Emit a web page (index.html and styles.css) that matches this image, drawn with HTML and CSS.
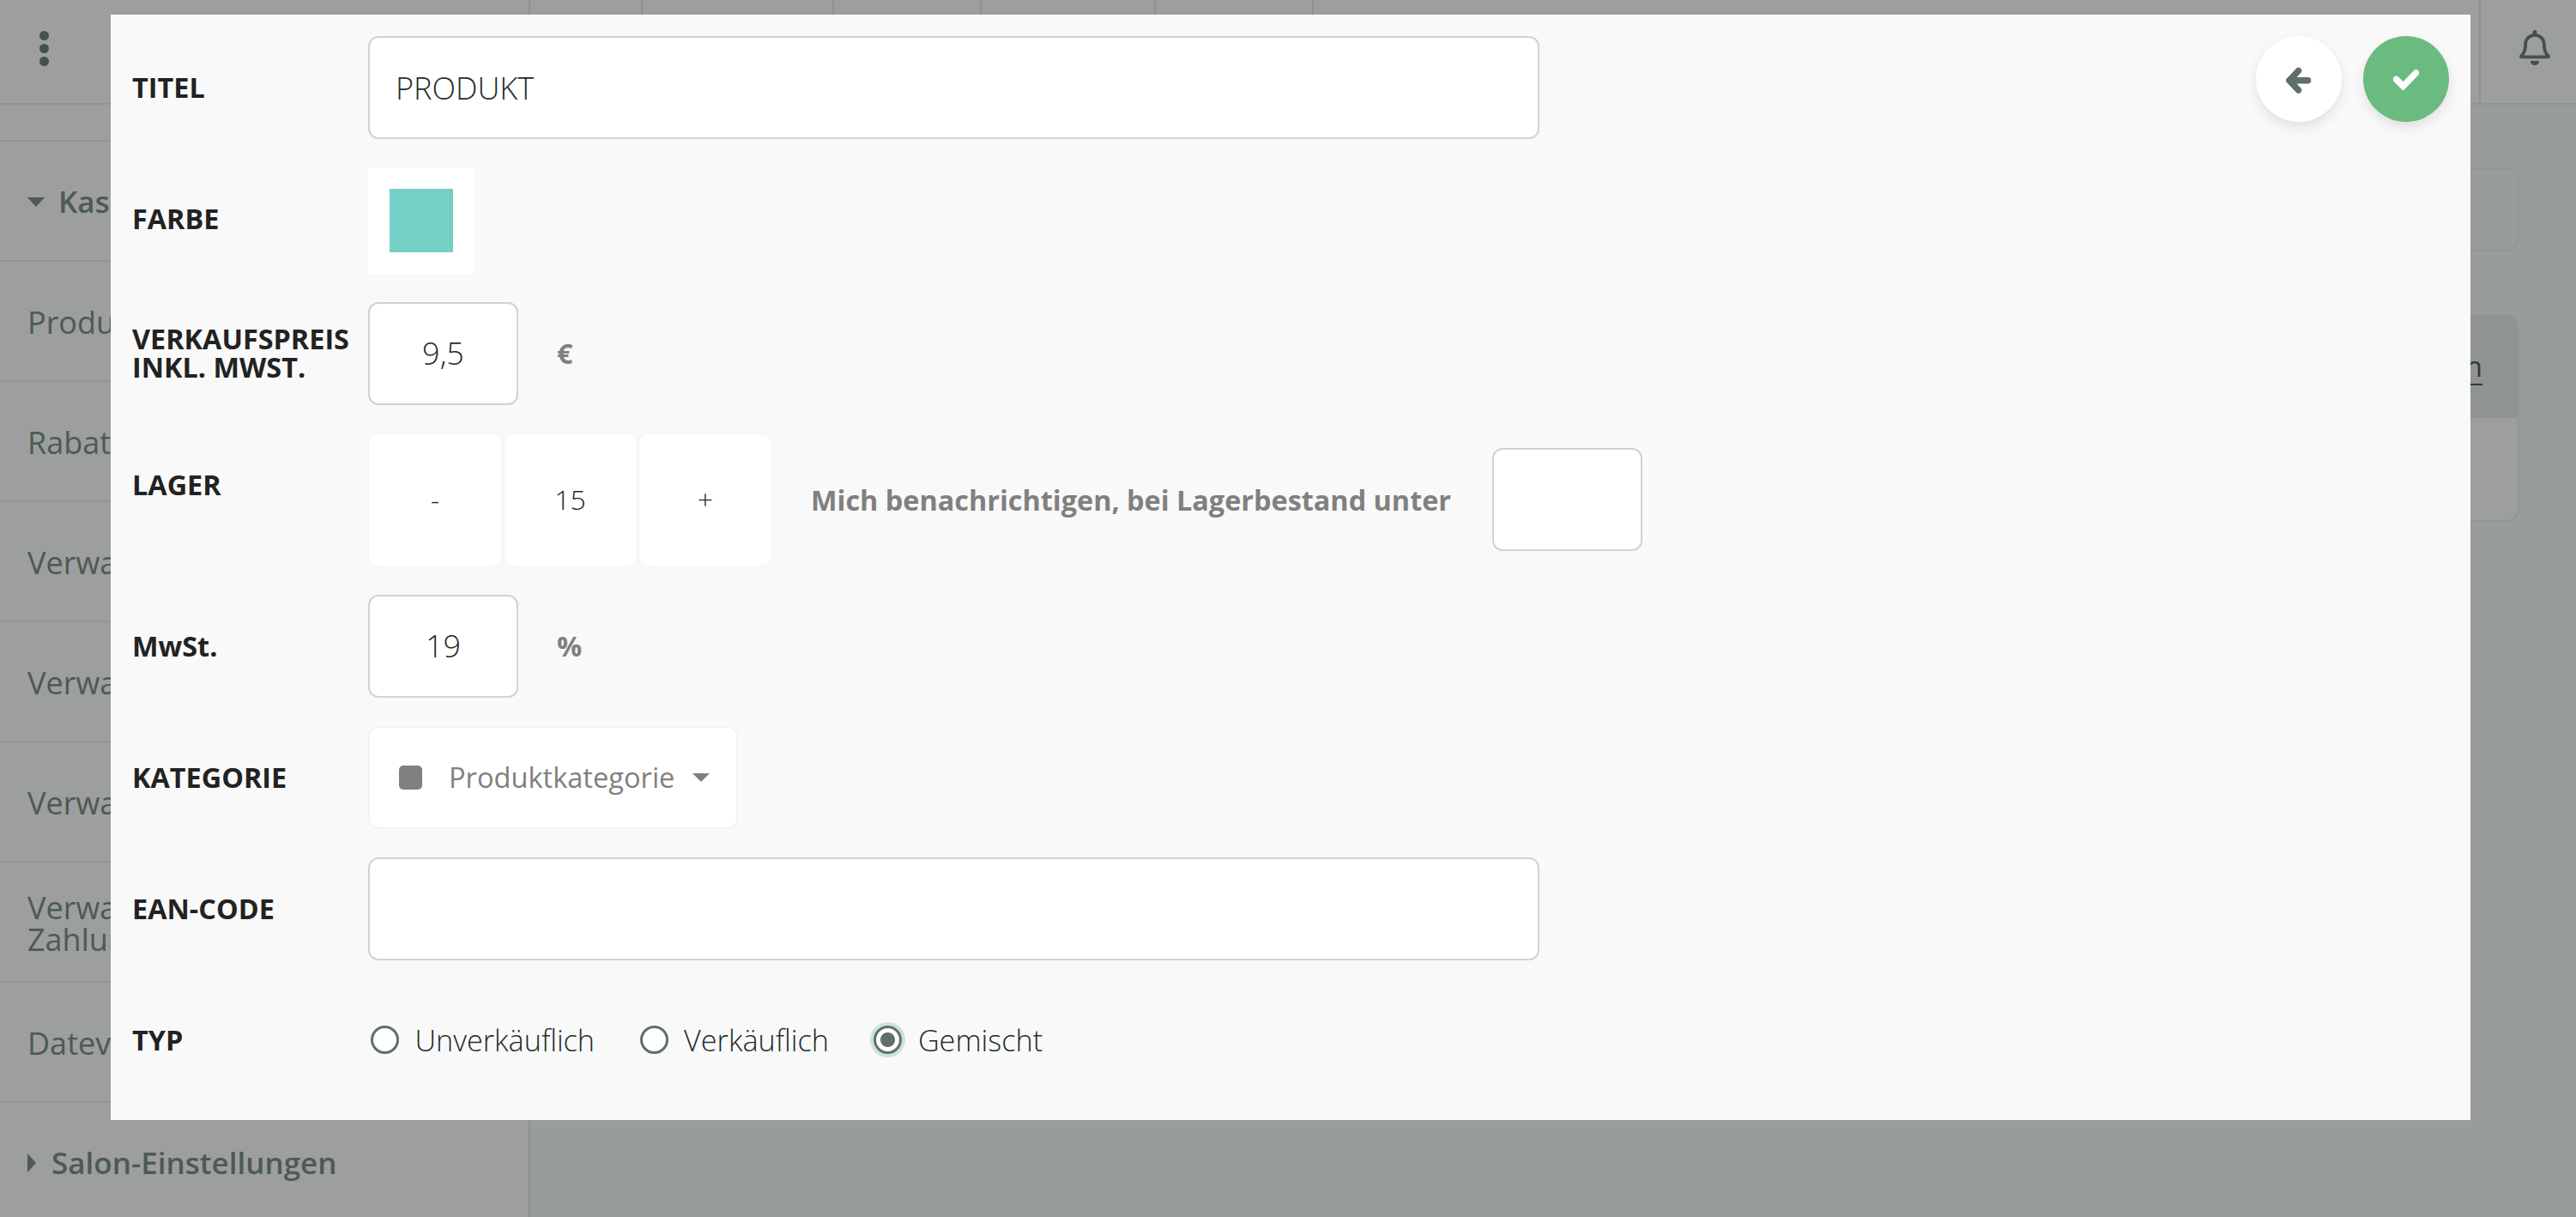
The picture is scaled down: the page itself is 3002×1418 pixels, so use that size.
FILE: index.html
```html
<!DOCTYPE html>
<html lang="de">
<head>
<meta charset="utf-8">
<title>Produkt</title>
<link rel="stylesheet" href="styles.css">
</head>
<body>
<div class="app">
  <header class="topbar">
    <div class="menu-cell"><span class="dot"></span><span class="dot"></span><span class="dot"></span></div>
    <div class="nav-cell w131"></div>
    <div class="nav-cell w223"></div>
    <div class="nav-cell w172"></div>
    <div class="nav-cell w203"></div>
    <div class="nav-cell w184"></div>
    <div class="nav-fill"></div>
    <div class="bell-cell">
      <svg class="bell" viewBox="0 0 448 512"><path d="M439.39 362.29c-19.32-20.76-55.47-51.99-55.47-154.29 0-77.7-54.48-139.9-127.94-155.16V32c0-17.67-14.32-32-31.98-32s-31.98 14.33-31.98 32v20.84C118.56 68.1 64.08 130.3 64.08 208c0 102.3-36.15 133.53-55.47 154.29-6 6.45-8.66 14.16-8.61 21.71.11 16.4 12.98 32 32.1 32h383.8c19.12 0 32-15.6 32.1-32 .05-7.55-2.61-15.27-8.61-21.71zM67.53 368c21.22-27.97 44.42-74.33 44.53-159.42 0-.2-.06-.38-.06-.58 0-61.86 50.14-112 112-112s112 50.14 112 112c0 .2-.06.38-.06.58.11 85.1 23.31 131.46 44.53 159.42H67.53zM224 512c35.32 0 63.97-28.65 63.97-64H160.03c0 35.35 28.65 64 63.97 64z"/></svg>
    </div>
  </header>
  <div class="main">
    <aside class="sidebar">
      <div class="side-gap"></div>
      <div class="side-head"><span class="caret-down"></span>Kasse</div>
      <div class="side-item">Produkte</div>
      <div class="side-item">Rabatte</div>
      <div class="side-item">Verwaltung</div>
      <div class="side-item">Verwaltung</div>
      <div class="side-item">Verwaltung</div>
      <div class="side-item side-two">Verwaltung<br>Zahlungen</div>
      <div class="side-item">Datev</div>
      <div class="side-head side-closed"><span class="caret-right"></span>Salon-Einstellungen</div>
    </aside>
    <section class="content">
      <div class="card card-top"></div>
      <div class="card card-table">
        <div class="table-head"><span class="table-link">Aktionen</span></div>
        <div class="table-row"></div>
      </div>
    </section>
  </div>

  <div class="overlay"></div>

  <div class="modal">
    <div class="actions">
      <div class="fab fab-white">
        <svg class="icon-arrow" viewBox="0 0 30 32"><path d="M14.5 4.5 L4 15.8 L14.5 27 M5 15.8 H25.5"/></svg>
      </div>
      <div class="fab fab-green">
        <svg class="icon-check" viewBox="0 0 30 24"><path d="M3.5 11.5 L11.5 19.5 L26.5 4"/></svg>
      </div>
    </div>

    <div class="row">
      <div class="label">TITEL</div>
      <input class="field field-wide" type="text" value="PRODUKT">
    </div>

    <div class="row">
      <div class="label">FARBE</div>
      <div class="color-box"><span class="swatch"></span></div>
    </div>

    <div class="row">
      <div class="label">VERKAUFSPREIS<br>INKL. MWST.</div>
      <input class="field field-small" type="text" value="9,5">
      <div class="unit">€</div>
    </div>

    <div class="row">
      <div class="label">LAGER</div>
      <div class="stepper">
        <div class="step">-</div>
        <div class="step">15</div>
        <div class="step">+</div>
      </div>
      <div class="notify">Mich benachrichtigen, bei Lagerbestand unter</div>
      <input class="field field-notify" type="text" value="">
    </div>

    <div class="row">
      <div class="label">MwSt.</div>
      <input class="field field-small" type="text" value="19">
      <div class="unit">%</div>
    </div>

    <div class="row">
      <div class="label">KATEGORIE</div>
      <div class="select">
        <span class="cat-square"></span>
        <span class="cat-text">Produktkategorie</span>
        <span class="cat-caret"></span>
      </div>
    </div>

    <div class="row">
      <div class="label">EAN-CODE</div>
      <input class="field field-wide" type="text" value="">
    </div>

    <div class="row row-last">
      <div class="label">TYP</div>
      <div class="radios">
        <div class="radio-opt"><span class="radio"></span>Unverkäuflich</div>
        <div class="radio-opt"><span class="radio"></span>Verkäuflich</div>
        <div class="radio-opt"><span class="radio radio-on"></span>Gemischt</div>
      </div>
    </div>
  </div>
</div>
</body>
</html>
```

FILE: styles.css
```css
* { box-sizing: border-box; }
html, body { margin: 0; padding: 0; }
body { font-family: "Open Sans", "Noto Sans", sans-serif; color: #6f817d; }

.app { position: relative; width: 3002px; height: 1418px; overflow: hidden; background: #f7f9f9; display: flex; flex-direction: column; }

/* page under the dialog */
.topbar { display: flex; height: 122px; flex: none; background: #fff; border-bottom: 2px solid #ecedec; }
.menu-cell { width: 618px; padding: 36px 0 0 46px; display: flex; flex-direction: column; gap: 4px; border-right: 2px solid #e4e6e5; }
.dot { width: 11px; height: 11px; border-radius: 50%; background: #62726f; }
.nav-cell { border-right: 2px solid #e4e6e5; }
.w131 { width: 131px; }
.w223 { width: 223px; }
.w172 { width: 172px; }
.w203 { width: 203px; }
.w184 { width: 184px; }
.nav-fill { flex: 1; border-right: 2px solid #e4e6e5; }
.bell-cell { width: 111px; padding: 35px 0 0 45px; }
.bell { display: block; width: 36px; height: 41px; fill: #62726f; }

.main { flex: 1; display: flex; min-height: 0; }
.sidebar { width: 618px; flex: none; background: #fff; border-right: 2px solid #e4e6e5; }
.side-gap { height: 43px; border-bottom: 2px solid #ecedec; }
.side-head, .side-item { height: 140px; display: flex; align-items: center; border-bottom: 2px solid #ecedec; line-height: 38px; padding-top: 3px; }
.side-head { font-size: 35px; font-weight: 600; padding-left: 32px; gap: 16px; padding-top: 2px; }
.side-closed { border-bottom: 0; gap: 18px; padding-top: 0; }
.side-item { padding-left: 32px; font-size: 36px; font-weight: 400; }
.side-two { line-height: 37px; }
.caret-down { width: 0; height: 0; border-left: 10px solid transparent; border-right: 10px solid transparent; border-top: 11px solid #6f817d; }
.caret-right { width: 0; height: 0; border-top: 11px solid transparent; border-bottom: 11px solid transparent; border-left: 10px solid #6f817d; }

.content { flex: 1; padding: 73px 66px 0 0; display: flex; flex-direction: column; align-items: flex-end; gap: 73px; }
.card { width: 2000px; border: 2px solid #eceeed; border-radius: 16px; background: #f7f9f9; }
.card-top { height: 98px; }
.card-table { height: 242px; overflow: hidden; background: #fff; }
.table-head { height: 119px; background: #e7eaea; display: flex; align-items: center; justify-content: flex-end; padding: 0 41px 2px 0; font-size: 33px; }
.table-link { color: #3b4a46; text-decoration: underline; text-underline-offset: 8px; text-decoration-thickness: 2px; }

.overlay { position: absolute; inset: 0; background: rgba(35, 42, 38, 0.45); }

/* dialog */
.modal { position: absolute; left: 129px; top: 17px; width: 2750px; height: 1288px; background: #f9f9f9; padding: 25px 0 0 25px; }
.actions { position: absolute; right: 25px; top: 25px; display: flex; gap: 25px; }
.fab { width: 100px; height: 100px; border-radius: 50%; display: flex; align-items: center; justify-content: center; box-shadow: 0 6px 14px rgba(0, 0, 0, 0.1); }
.fab-white { background: #fff; }
.fab-green { background: #6bba80; }
.icon-arrow { width: 30px; height: 32px; fill: none; stroke: #5f6f6a; stroke-width: 7.5; stroke-linecap: round; stroke-linejoin: miter; margin-top: 3px; }
.icon-check { width: 30px; height: 24px; fill: none; stroke: #fff; stroke-width: 7.5; stroke-linecap: round; stroke-linejoin: miter; margin-top: 2px; }

.row { display: flex; align-items: flex-start; margin-bottom: 33px; }
.row-last { margin-bottom: 0; }
.label { width: 275px; flex: none; height: 120px; padding-bottom: 2px; display: flex; align-items: center; font-size: 32.4px; line-height: 33px; font-weight: 700; color: #222; }

.field { display: block; height: 120px; flex: none; border: 2px solid #cfd3d2; border-radius: 12px; background: #fff; font: 300 36px "Open Sans", sans-serif; color: #222d29; outline: none; }
.field-wide { width: 1365px; padding: 0 30px; }
.field-small { width: 175px; text-align: center; padding: 0 0 2px; }
.field-notify { width: 175px; margin: 17px 0 0 48px; }
.unit { height: 120px; padding-bottom: 2px; display: flex; align-items: center; margin-left: 45px; font-size: 32.4px; font-weight: 700; color: #808080; }

.color-box { width: 124px; height: 124px; background: #fff; padding: 25px; }
.swatch { display: block; width: 74px; height: 74px; background: #76cfc5; }

.stepper { display: flex; gap: 1.5px; }
.step { width: 156px; height: 155px; padding-bottom: 2px; display: flex; align-items: center; justify-content: center; background: #fff; border: 1px solid #f5f5f5; border-radius: 12px; font-size: 32px; font-weight: 350; color: #1f2a26; }
.notify { margin-left: 45px; height: 155px; padding-bottom: 2px; display: flex; align-items: center; font-size: 32.4px; font-weight: 700; color: #808080; }

.select { width: 431px; height: 120px; padding-bottom: 1px; display: flex; align-items: center; padding-left: 34px; background: #fff; border: 2px solid #f3f3f3; border-radius: 12px; }
.cat-square { width: 27px; height: 28px; border-radius: 5px; background: #808080; }
.cat-text { margin-left: 31px; font-size: 32.6px; font-weight: 400; color: #808080; }
.cat-caret { margin-left: 21px; width: 0; height: 0; border-left: 10px solid transparent; border-right: 10px solid transparent; border-top: 10px solid #808080; }

.radios { display: flex; height: 120px; padding-bottom: 2px; align-items: center; padding-left: 3px; gap: 52.5px; }
.radio-opt { display: flex; align-items: center; gap: 18.5px; font-size: 34.2px; font-weight: 300; color: #222d29; }
.radio { width: 33px; height: 33px; border-radius: 50%; border: 3px solid #5f6f6a; background: #fff; display: block; }
.radio-on { background: radial-gradient(circle, #5f6f6a 0 8px, #fff 9px); box-shadow: 0 0 0 4px #c9e6d2; }
```
